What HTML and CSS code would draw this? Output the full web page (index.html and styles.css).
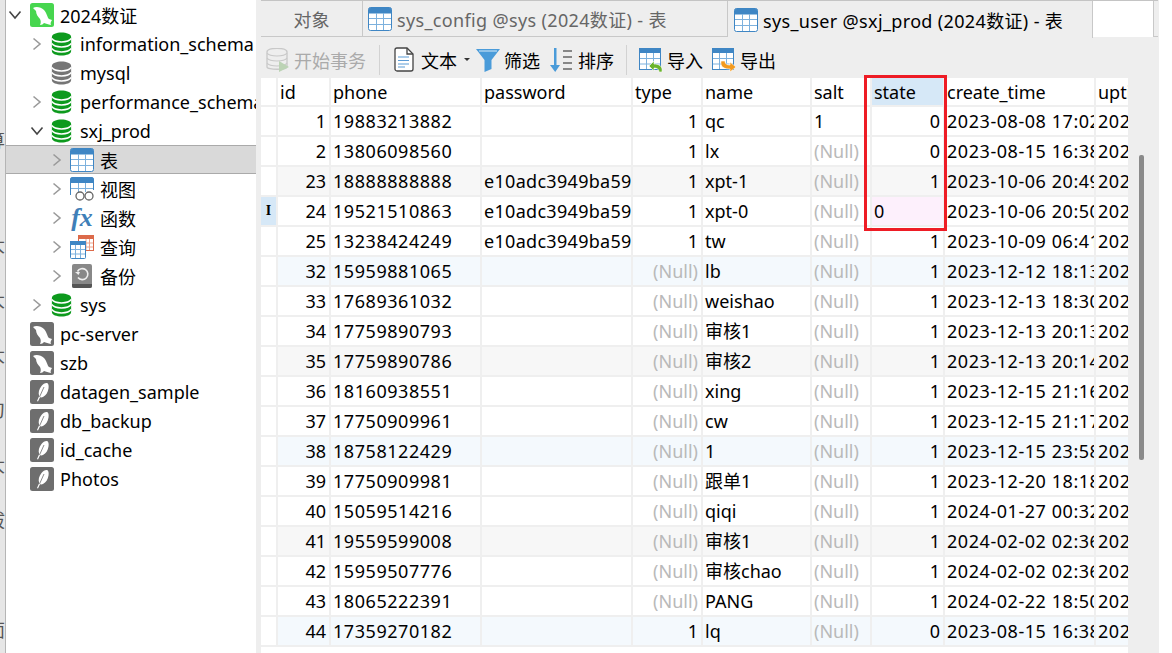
FILE: index.html
```html
<!DOCTYPE html>
<html lang="zh">
<head>
<meta charset="utf-8">
<title>sys_user @sxj_prod (2024数证) - 表</title>
<link rel="stylesheet" href="styles.css">
</head>
<body>
<svg class="defs" width="0" height="0" aria-hidden="true">
  <defs>
    <symbol id="i-db" viewBox="0 0 24 24" preserveAspectRatio="none">
      <path d="M1 5c0-6 22-6 22 0v14c0 6-22 6-22 0z" fill="currentColor"/>
      <path d="M1 6.500c3 4.500 19 4.500 22 0M1 11.500c3 4.500 19 4.500 22 0M1 16.500c3 4.500 19 4.500 22 0" fill="none" stroke="#fff" stroke-width="1.500"/>
    </symbol>
    <symbol id="i-dolphin" viewBox="0 0 24 24">
      <rect width="24" height="24" rx="2.500" fill="currentColor"/>
      <path d="M3 5C6 3 11 4 14 7c3 3 3 7 5 9l3 1c-1 2-2 3-1 5-3-1-5-1-7-2-1 1-2 2-4 2 1-2 1-4 0-6-2-2-4-5-4-8-1-1-2-2-3-3z" fill="#fff"/>
    </symbol>
    <symbol id="i-feather" viewBox="0 0 24 24">
      <rect width="24" height="24" rx="2.500" fill="#6e6e6e"/>
      <path d="M16.500 3c2 0 2.500 2.500 2 5.500-.6 4-2.500 7-5.500 8.500-1 .5-2 .5-3 .3L8 21.500l-1-.5 2.200-5C8 13 9 9 11.500 6c1.500-1.800 3.300-3 5-3z" fill="#fff"/>
      <path d="M9.500 17l4.500-10" stroke="#6e6e6e" stroke-width=".8"/>
    </symbol>
    <symbol id="i-table" viewBox="0 0 24 24">
      <rect x=".5" y=".5" width="23" height="23" rx="2" fill="#fff" stroke="#3f86c4"/>
      <path d="M1 2.500a1.500 1.500 0 0 1 1.500-1.500h19a1.500 1.500 0 0 1 1.500 1.500V6H1z" fill="#3f86c4" stroke="#3f86c4"/>
      <path d="M8.500 6v17M15.500 6v17M1 11.500h22M1 17.500h22" stroke="#7db1dd" fill="none"/>
    </symbol>
    <symbol id="i-chev" viewBox="0 0 10 14">
      <path d="M1.500 1.500L8 7l-6.500 5.500" fill="none" stroke="#9a9a9a" stroke-width="1.600"/>
    </symbol>
    <symbol id="i-down" viewBox="0 0 14 10">
      <path d="M1.500 1.500L7 8l5.500-6.500" fill="none" stroke="#444" stroke-width="1.600"/>
    </symbol>
  </defs>
</svg>

<div class="page">
  <div class="strip">
    <span class="frag frag-a">算</span>
    <span class="frag frag-d">大</span>
    <span class="frag frag-b">大</span>
    <span class="frag frag-b">大</span>
    <span class="frag frag-b">刀</span>
    <span class="frag frag-b">大</span>
    <span class="frag frag-b">拔</span>
    <span class="frag frag-c">面</span>
  </div>

  <nav class="tree">
    <div class="node lv0"><svg class="chev-d"><use href="#i-down"/></svg><svg class="ico c-green-bright"><use href="#i-dolphin"/></svg><span>2024数证</span></div>
    <div class="node lv1"><svg class="chev"><use href="#i-chev"/></svg><svg class="ico db c-green"><use href="#i-db"/></svg><span>information_schema</span></div>
    <div class="node lv1"><span class="chev"></span><svg class="ico db c-gray"><use href="#i-db"/></svg><span>mysql</span></div>
    <div class="node lv1"><svg class="chev"><use href="#i-chev"/></svg><svg class="ico db c-green"><use href="#i-db"/></svg><span>performance_schema</span></div>
    <div class="node lv1"><svg class="chev-d"><use href="#i-down"/></svg><svg class="ico db c-green"><use href="#i-db"/></svg><span>sxj_prod</span></div>
    <div class="node lv2 selected"><svg class="chev"><use href="#i-chev"/></svg><svg class="ico"><use href="#i-table"/></svg><span>表</span></div>
    <div class="node lv2"><svg class="chev"><use href="#i-chev"/></svg>
      <svg class="ico" viewBox="0 0 24 24"><path d="M.5 18V2a1.500 1.500 0 0 1 1.500-1.500h20A1.500 1.500 0 0 1 23.500 2v11" fill="#fff" stroke="#3f86c4"/><path d="M1 1h22v5H1z" fill="#3f86c4"/><path d="M8.500 6v9M15.500 6v9M1 11.500h22" stroke="#7db1dd"/><circle cx="10" cy="19" r="4" fill="#fff" stroke="#666" stroke-width="1.300"/><circle cx="19" cy="19" r="4" fill="#fff" stroke="#666" stroke-width="1.300"/></svg><span>视图</span></div>
    <div class="node lv2"><svg class="chev"><use href="#i-chev"/></svg><span class="ico fx">fx</span><span>函数</span></div>
    <div class="node lv2"><svg class="chev"><use href="#i-chev"/></svg>
      <svg class="ico" viewBox="0 0 24 24"><rect x="8.500" y=".5" width="15" height="15" fill="#fff" stroke="#dc6a4a"/><path d="M8 0h16v4H8z" fill="#dc6a4a"/><path d="M16 4v11M19.500 4v11M9 8h14M9 12h14" stroke="#eba48f"/><rect x=".5" y="6.500" width="15" height="17" rx="1" fill="#fff" stroke="#3f86c4"/><path d="M0 6h16v4H0z" fill="#3f86c4"/><path d="M5.500 10v13M10.500 10v13M1 14.500h14M1 19h14" stroke="#7db1dd"/></svg><span>查询</span></div>
    <div class="node lv2"><svg class="chev"><use href="#i-chev"/></svg>
      <svg class="ico" viewBox="0 0 24 24"><rect x="2" width="20" height="24" rx="2" fill="#888"/><path d="M2 20h20v2a2 2 0 0 1-2 2H4a2 2 0 0 1-2-2z" fill="#555"/><path d="M7.500 7.500a5.500 5.500 0 1 1 .5 6" fill="none" stroke="#eee" stroke-width="1.600"/><path d="M5 8h5l-1.500 3z" fill="#eee"/></svg><span>备份</span></div>
    <div class="node lv1"><svg class="chev"><use href="#i-chev"/></svg><svg class="ico db c-green"><use href="#i-db"/></svg><span>sys</span></div>
    <div class="node lv0"><span class="chev-d"></span><svg class="ico c-mid"><use href="#i-dolphin"/></svg><span>pc-server</span></div>
    <div class="node lv0"><span class="chev-d"></span><svg class="ico c-mid"><use href="#i-dolphin"/></svg><span>szb</span></div>
    <div class="node lv0"><span class="chev-d"></span><svg class="ico"><use href="#i-feather"/></svg><span>datagen_sample</span></div>
    <div class="node lv0"><span class="chev-d"></span><svg class="ico"><use href="#i-feather"/></svg><span>db_backup</span></div>
    <div class="node lv0"><span class="chev-d"></span><svg class="ico"><use href="#i-feather"/></svg><span>id_cache</span></div>
    <div class="node lv0"><span class="chev-d"></span><svg class="ico"><use href="#i-feather"/></svg><span>Photos</span></div>
  </nav>

  <main class="main">
    <div class="tabs">
      <div class="tab tab-obj">对象</div>
      <div class="tab tab-doc"><svg class="ico"><use href="#i-table"/></svg><span>sys_config @sys (2024数证) - 表</span></div>
      <div class="tab tab-doc tab-active"><svg class="ico"><use href="#i-table"/></svg><span>sys_user @sxj_prod (2024数证) - 表</span></div>
      <div class="tab tab-blank"></div>
    </div>

    <div class="toolbar">
      <div class="tool disabled">
        <svg class="ico" viewBox="0 0 24 24"><path d="M1 4c0-5 20-5 20 0v15c0 3-20 3-20 0z" fill="#eee" stroke="#c8c8c8" stroke-width="1.300"/><path d="M1 5c3 4 17 4 20 0M1 10c3 4 17 4 20 0M1 15c3 4 17 4 20 0" fill="none" stroke="#c8c8c8" stroke-width="1.200"/><path d="M13 13l10 6-10 5z" fill="#bcd3b5"/></svg>
        <span>开始事务</span>
      </div>
      <div class="sep sep-a"></div>
      <div class="tool tool-text">
        <svg class="ico ico-doc" viewBox="0 0 20 25"><path d="M1 3a2 2 0 0 1 2-2h10l6 6v15a2 2 0 0 1-2 2H3a2 2 0 0 1-2-2z" fill="#fff" stroke="#444" stroke-width="1.300"/><path d="M13 1v6h6" fill="none" stroke="#444" stroke-width="1.300"/><path d="M4 10h11M4 13.500h11M4 17h11M4 20h7" stroke="#5b9bd5" stroke-width="1.200"/></svg>
        <span>文本</span><i class="caret"></i>
      </div>
      <div class="tool tool-filter">
        <svg class="ico" viewBox="0 0 24 24"><path d="M0 1h24l-8.500 11v9l-7 3V12z" fill="#4a9bd9"/><path d="M3 3h18" stroke="#a9d0ee" stroke-width="1.500"/></svg>
        <span>筛选</span>
      </div>
      <div class="tool tool-sort">
        <svg class="ico" viewBox="0 0 24 24"><path d="M5 0h2.500v17H11l-4.800 7L1 17h4z" fill="#4a9bd9"/><path d="M14 3h9M14 9h9M14 15h9M14 21h9" stroke="#666" stroke-width="1.300"/></svg>
        <span>排序</span>
      </div>
      <div class="sep sep-b"></div>
      <div class="tool tool-imp">
        <svg class="ico" viewBox="0 0 24 24"><rect x=".5" y=".5" width="21" height="21" fill="#fff" stroke="#3f86c4"/><path d="M0 0h22v5H0z" fill="#3f86c4"/><path d="M7.500 5v16M14.500 5v16M1 10.500h20M1 16h20" stroke="#7db1dd"/><path d="M23 24c1-6-3-8-8-8v-3l-5 5 5 5v-3c3 0 5 1 5 4z" fill="#6ab42d" stroke="#fff" stroke-width=".6"/></svg>
        <span>导入</span>
      </div>
      <div class="tool tool-exp">
        <svg class="ico" viewBox="0 0 24 24"><rect x=".5" y=".5" width="21" height="21" fill="#fff" stroke="#3f86c4"/><path d="M0 0h22v5H0z" fill="#3f86c4"/><path d="M7.500 5v16M14.500 5v16M1 10.500h20M1 16h20" stroke="#7db1dd"/><path d="M9 13c-1 6 3 8 9 8v3l6-5-6-5v3c-3 0-5-1-5-4z" fill="#f39a1f" stroke="#fff" stroke-width=".6"/></svg>
        <span>导出</span>
      </div>
    </div>

    <div class="body">
      <div class="grid-wrap">
        <table class="grid">
          <colgroup>
            <col class="w-rh"><col class="w-id"><col class="w-phone"><col class="w-pass"><col class="w-type"><col class="w-name"><col class="w-salt"><col class="w-state"><col class="w-time"><col class="w-upt">
          </colgroup>
          <thead>
            <tr><th></th><th>id</th><th>phone</th><th>password</th><th>type</th><th>name</th><th>salt</th><th class="hd-sel">state</th><th>create_time</th><th>uptime</th></tr>
          </thead>
          <tbody>
            <tr><td class="rh"></td><td class="n">1</td><td class="d">19883213882</td><td class="p"></td><td class="n">1</td><td>qc</td><td>1</td><td class="n">0</td><td class="d">2023-08-08 17:02:11</td><td class="d">2023-08-08</td></tr>
            <tr><td class="rh"></td><td class="n">2</td><td class="d">13806098560</td><td class="p"></td><td class="n">1</td><td>lx</td><td class="nul">(Null)</td><td class="n">0</td><td class="d">2023-08-15 16:38:20</td><td class="d">2023-08-15</td></tr>
            <tr class="alt"><td class="rh"></td><td class="n">23</td><td class="d">18888888888</td><td class="p">e10adc3949ba59abbe56e057f20f883e</td><td class="n">1</td><td>xpt-1</td><td class="nul">(Null)</td><td class="n">1</td><td class="d">2023-10-06 20:49:02</td><td class="d">2023-10-06</td></tr>
            <tr><td class="rh rh-cur"><span class="ibeam">I</span></td><td class="n">24</td><td class="d">19521510863</td><td class="p">e10adc3949ba59abbe56e057f20f883e</td><td class="n">1</td><td>xpt-0</td><td class="nul">(Null)</td><td class="edit">0</td><td class="d">2023-10-06 20:50:41</td><td class="d">2023-10-06</td></tr>
            <tr><td class="rh"></td><td class="n">25</td><td class="d">13238424249</td><td class="p">e10adc3949ba59abbe56e057f20f883e</td><td class="n">1</td><td>tw</td><td class="nul">(Null)</td><td class="n">1</td><td class="d">2023-10-09 06:41:15</td><td class="d">2023-10-09</td></tr>
            <tr class="blue"><td class="rh"></td><td class="n">32</td><td class="d">15959881065</td><td class="p"></td><td class="nul n">(Null)</td><td>lb</td><td class="nul">(Null)</td><td class="n">1</td><td class="d">2023-12-12 18:13:30</td><td class="d">2023-12-12</td></tr>
            <tr><td class="rh"></td><td class="n">33</td><td class="d">17689361032</td><td class="p"></td><td class="nul n">(Null)</td><td>weishao</td><td class="nul">(Null)</td><td class="n">1</td><td class="d">2023-12-13 18:30:08</td><td class="d">2023-12-13</td></tr>
            <tr><td class="rh"></td><td class="n">34</td><td class="d">17759890793</td><td class="p"></td><td class="nul n">(Null)</td><td>审核1</td><td class="nul">(Null)</td><td class="n">1</td><td class="d">2023-12-13 20:13:44</td><td class="d">2023-12-13</td></tr>
            <tr class="alt"><td class="rh"></td><td class="n">35</td><td class="d">17759890786</td><td class="p"></td><td class="nul n">(Null)</td><td>审核2</td><td class="nul">(Null)</td><td class="n">1</td><td class="d">2023-12-13 20:14:10</td><td class="d">2023-12-13</td></tr>
            <tr><td class="rh"></td><td class="n">36</td><td class="d">18160938551</td><td class="p"></td><td class="nul n">(Null)</td><td>xing</td><td class="nul">(Null)</td><td class="n">1</td><td class="d">2023-12-15 21:16:22</td><td class="d">2023-12-15</td></tr>
            <tr><td class="rh"></td><td class="n">37</td><td class="d">17750909961</td><td class="p"></td><td class="nul n">(Null)</td><td>cw</td><td class="nul">(Null)</td><td class="n">1</td><td class="d">2023-12-15 21:17:05</td><td class="d">2023-12-15</td></tr>
            <tr class="blue"><td class="rh"></td><td class="n">38</td><td class="d">18758122429</td><td class="p"></td><td class="nul n">(Null)</td><td>1</td><td class="nul">(Null)</td><td class="n">1</td><td class="d">2023-12-15 23:58:39</td><td class="d">2023-12-15</td></tr>
            <tr><td class="rh"></td><td class="n">39</td><td class="d">17750909981</td><td class="p"></td><td class="nul n">(Null)</td><td>跟单1</td><td class="nul">(Null)</td><td class="n">1</td><td class="d">2023-12-20 18:18:27</td><td class="d">2023-12-20</td></tr>
            <tr><td class="rh"></td><td class="n">40</td><td class="d">15059514216</td><td class="p"></td><td class="nul n">(Null)</td><td>qiqi</td><td class="nul">(Null)</td><td class="n">1</td><td class="d">2024-01-27 00:32:16</td><td class="d">2024-01-27</td></tr>
            <tr class="alt"><td class="rh"></td><td class="n">41</td><td class="d">19559599008</td><td class="p"></td><td class="nul n">(Null)</td><td>审核1</td><td class="nul">(Null)</td><td class="n">1</td><td class="d">2024-02-02 02:36:50</td><td class="d">2024-02-02</td></tr>
            <tr><td class="rh"></td><td class="n">42</td><td class="d">15959507776</td><td class="p"></td><td class="nul n">(Null)</td><td>审核chao</td><td class="nul">(Null)</td><td class="n">1</td><td class="d">2024-02-02 02:36:58</td><td class="d">2024-02-02</td></tr>
            <tr><td class="rh"></td><td class="n">43</td><td class="d">18065222391</td><td class="p"></td><td class="nul n">(Null)</td><td>PANG</td><td class="nul">(Null)</td><td class="n">1</td><td class="d">2024-02-22 18:50:33</td><td class="d">2024-02-22</td></tr>
            <tr class="blue"><td class="rh"></td><td class="n">44</td><td class="d">17359270182</td><td class="p"></td><td class="n">1</td><td>lq</td><td class="nul">(Null)</td><td class="n">0</td><td class="d">2023-08-15 16:38:20</td><td class="d">2023-08-15</td></tr>
          </tbody>
        </table>
        <div class="mark"></div>
      </div>
      <div class="vscroll"><div class="thumb"></div></div>
    </div>
  </main>
  <div class="right-edge"></div>
</div>
</body>
</html>
```

FILE: styles.css
```css
* { box-sizing: border-box; }
html, body { margin: 0; height: 100%; overflow: hidden; background: #fff; }
body {
  font-family: "Noto Sans", "Noto Sans CJK SC", sans-serif;
  font-size: 18px;
  color: #000;
}
.defs { position: absolute; }
.page { display: flex; width: 1172px; height: 653px; overflow: hidden; }

/* Window behind the app, mostly hidden */
.strip {
  width: 6px;
  flex: none;
  background: #e6e6e6;
  border-right: 1px solid #b5b5b5;
  display: flex;
  flex-direction: column;
  align-items: flex-end;
  overflow: hidden;
  color: #555;
}
.frag { display: block; width: 18px; height: 24px; line-height: 24px; flex: none; }
.frag-a { margin-top: 128px; }
.frag-d { margin-top: 81px; }
.frag-b { margin-top: 31px; }
.frag-c { margin-top: 86px; }

/* Tree */
.tree { width: 250px; flex: none; overflow: hidden; white-space: nowrap; background: #fff; }
.node { display: flex; align-items: center; height: 29px; color: #000; }
.node .ico { width: 24px; height: 24px; flex: none; }
.node .db { width: 21px; }
.chev { width: 10px; height: 14px; flex: none; }
.chev-d { width: 14px; height: 10px; flex: none; }
.lv0 { padding-left: 2px; }
.lv0 .chev-d { margin-right: 8px; }
.lv0 .ico { margin-right: 6px; }
.lv1 { padding-left: 25px; }
.lv1 .chev { margin-right: 9px; margin-left: 1px; }
.lv1 .chev-d { margin-right: 7px; margin-left: -1px; }
.lv1 .ico { margin-right: 8px; }
.lv2 { padding-left: 46px; }
.lv2 .chev { margin-right: 8px; }
.lv2 .ico { margin-right: 6px; }
.selected { background: #d9d9d9; border-top: 1px solid #aaa; border-bottom: 1px solid #aaa; }
.c-green { color: #0d9a1d; }
.c-green-bright { color: #47d64f; }
.c-gray { color: #757575; }
.c-mid { color: #6e6e6e; }
.fx {
  font-family: "Liberation Serif", serif;
  font-style: italic;
  font-weight: 700;
  font-size: 26px;
  line-height: 24px;
  color: #3f7fb8;
  text-align: center;
}

/* Main */
.main {
  width: 902px;
  flex: none;
  padding-left: 5px;
  background: #eee;
  display: flex;
  flex-direction: column;
}
.tabs { display: flex; height: 37px; flex: none; border-top: 1px solid #c4c4c4; border-bottom: 1px solid #c8c8c8; background: #eee; }
.tab { display: flex; align-items: center; height: 36px; color: #666; letter-spacing: .35px; }
.tab-obj { width: 102px; justify-content: center; border-right: 1px solid #c8c8c8; letter-spacing: 0; }
.tab-doc { width: 365px; padding-left: 5px; gap: 5px; border-right: 1px solid #c8c8c8; }
.tab-doc .ico { width: 24px; height: 24px; flex: none; }
.tab-active { color: #000; background: #eee; height: 37px; border-left: 1px solid #eee; }
.tab-blank { width: 61px; background: #fff; border-right: 1px solid #c8c8c8; }

.toolbar { display: flex; align-items: center; height: 41px; flex: none; padding: 4px 0 0 5px; white-space: nowrap; }
.tool { display: flex; align-items: center; gap: 4px; }
.tool .ico { width: 24px; height: 24px; flex: none; }
.tool .ico-doc { width: 20px; height: 25px; }
.disabled { color: #aaa; }
.sep { width: 1px; height: 30px; background: #d2d2d2; flex: none; }
.sep-a { margin: 0 14px 0 13px; }
.sep-b { margin: 0 12px 0 12px; }
.tool-text { gap: 7px; width: 82px; }
.caret { width: 0; height: 0; border: 3px solid transparent; border-top: 3px solid #333; border-bottom: 0; }
.tool-filter { margin-right: 9px; }
.tool-sort { gap: 5px; }
.tool-imp { margin-right: 9px; }

.body { flex: 1; display: flex; min-height: 0; }
.grid-wrap { width: 867px; flex: none; position: relative; background: #fff; }
.grid { table-layout: fixed; width: 867px; border-collapse: separate; border-spacing: 0; }
.w-rh { width: 17px; }
.w-id { width: 53px; }
.w-phone { width: 151px; }
.w-pass { width: 151px; }
.w-type { width: 70px; }
.w-name { width: 109px; }
.w-salt { width: 60px; }
.w-state { width: 73px; }
.w-time { width: 151px; }
.w-upt { width: 32px; }
.grid th, .grid td {
  height: 30px;
  padding: 0 3px 0 2px;
  font-weight: 400;
  text-align: left;
  vertical-align: top;
  white-space: nowrap;
  overflow: hidden;
  border-right: 2px solid #efefef;
  border-bottom: 2px solid #efefef;
  line-height: 28px;
}
.grid th { height: 29px; background: #fff; padding-top: 2px; line-height: 25px; }
.grid th:last-child, .grid td:last-child { border-right: 0; }
.grid .hd-sel { background: #d6e8f7; }
.grid .n { text-align: right; }
.grid .d { letter-spacing: .55px; }
.grid .p { letter-spacing: .3px; }
.alt td { background: #f7f7f7; }
.blue td { background: #f4f9fd; }
.grid .rh { background: #fff; }
.grid .rh-cur { background: #d6e8f7; padding: 0; text-align: center; }
.ibeam { display: block; font-family: "Liberation Serif", serif; font-size: 14px; font-weight: 700; }
.grid .nul { color: #b9b9b9; }
.grid .edit { background: #fdf0fc; }
.mark {
  position: absolute;
  left: 603px;
  top: -3px;
  width: 83px;
  height: 156px;
  border: 3px solid #ee1c25;
}
.vscroll { width: 30px; flex: none; padding: 77px 0 0 11px; }
.thumb { width: 5px; height: 305px; background: #8a8a8a; border-radius: 2px; }
.right-edge { flex: 1; background: #fff; border-left: 1px solid #eee; }
```
